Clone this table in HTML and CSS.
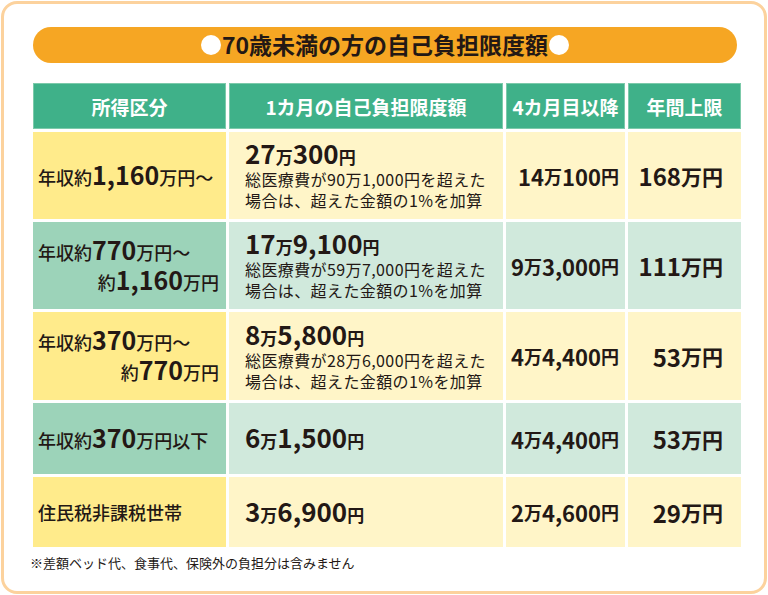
FILE: index.html
```html
<!DOCTYPE html>
<html lang="ja">
<head>
<meta charset="utf-8">
<title>70歳未満の方の自己負担限度額</title>
<link rel="stylesheet" href="styles.css">
</head>
<body>
<div class="card">
  <div class="title"><span class="dot"></span><span class="title-text">70歳未満の方の自己負担限度額</span><span class="dot"></span></div>
  <div class="table">
    <div class="th">所得区分</div>
    <div class="th">1カ月の自己負担限度額</div>
    <div class="th">4カ月目以降</div>
    <div class="th">年間上限</div>

    <div class="c1 y"><div class="l1">年収約<b class="n">1,160</b>万円～</div></div>
    <div class="c2 ly"><div class="blk"><div class="big"><b class="n">27</b>万<b class="n">300</b>円</div><div class="desc">総医療費が90万1,000円を超えた</div><div class="desc">場合は、超えた金額の1%を加算</div></div></div>
    <div class="c3 ly"><b class="n">14</b>万<b class="n">100</b>円</div>
    <div class="c4 ly"><b class="n">168</b>万円</div>

    <div class="c1 g two"><div class="l1">年収約<b class="n">770</b>万円～</div><div class="l2">約<b class="n">1,160</b>万円</div></div>
    <div class="c2 lg"><div class="blk"><div class="big"><b class="n">17</b>万<b class="n">9,100</b>円</div><div class="desc">総医療費が59万7,000円を超えた</div><div class="desc">場合は、超えた金額の1%を加算</div></div></div>
    <div class="c3 lg"><b class="n">9</b>万<b class="n">3,000</b>円</div>
    <div class="c4 lg"><b class="n">111</b>万円</div>

    <div class="c1 y two"><div class="l1">年収約<b class="n">370</b>万円～</div><div class="l2">約<b class="n">770</b>万円</div></div>
    <div class="c2 ly"><div class="blk"><div class="big"><b class="n">8</b>万<b class="n">5,800</b>円</div><div class="desc">総医療費が28万6,000円を超えた</div><div class="desc">場合は、超えた金額の1%を加算</div></div></div>
    <div class="c3 ly"><b class="n">4</b>万<b class="n">4,400</b>円</div>
    <div class="c4 ly"><b class="n">53</b>万円</div>

    <div class="c1 g"><div class="l1">年収約<b class="n">370</b>万円以下</div></div>
    <div class="c2 lg"><div class="big"><b class="n">6</b>万<b class="n">1,500</b>円</div></div>
    <div class="c3 lg"><b class="n">4</b>万<b class="n">4,400</b>円</div>
    <div class="c4 lg"><b class="n">53</b>万円</div>

    <div class="c1 y"><div class="l1">住民税非課税世帯</div></div>
    <div class="c2 ly"><div class="big"><b class="n">3</b>万<b class="n">6,900</b>円</div></div>
    <div class="c3 ly"><b class="n">2</b>万<b class="n">4,600</b>円</div>
    <div class="c4 ly"><b class="n">29</b>万円</div>
  </div>
  <p class="note">※差額ベッド代、食事代、保険外の負担分は含みません</p>
</div>
</body>
</html>
```
FILE: styles.css
```css
html, body {
  margin: 0;
  padding: 0;
  background: #ffffff;
}
body {
  font-family: "Noto Sans CJK JP", "Noto Sans", sans-serif;
  color: #231815;
}
.card {
  box-sizing: border-box;
  width: 766px;
  height: 593px;
  margin: 1px;
  border: 3px solid #fcd29d;
  border-radius: 16px;
  padding: 23px 0 0 29px;
}
.title {
  width: 704px;
  height: 36px;
  border-radius: 18px;
  background: #f6a623;
  display: flex;
  align-items: center;
  justify-content: center;
  font-size: 23px;
  font-weight: 700;
  line-height: 1;
  margin-bottom: 20px;
}
.dot {
  width: 20px;
  height: 20px;
  border-radius: 50%;
  background: #ffffff;
  margin: 0 1px;
}
.title-text {
  position: relative;
  top: -1px;
}
.table {
  display: grid;
  grid-template-columns: 193px 274px 119px 113px;
  grid-template-rows: 46px 87px 87px 88px 71px 70px;
  gap: 3px;
  width: 708px;
}
.th {
  background: #3fb189;
  color: #ffffff;
  font-size: 19px;
  font-weight: 700;
  display: flex;
  align-items: center;
  justify-content: center;
  box-shadow: inset 0 0 0 1px #7ccaaa;
}
.y { background: #ffeb8b; }
.ly { background: #fff5c8; }
.g { background: #9cd3b9; }
.lg { background: #d0e9dc; }
.n { font-weight: 700; }

.c1 {
  display: flex;
  flex-direction: column;
  justify-content: center;
  padding: 0 7px 0 5px;
  font-size: 18px;
  font-weight: 500;
  line-height: 27px;
}
.c1 .n { font-size: 25px; }
.c1 .l2 { text-align: right; }

.c2 {
  display: flex;
  align-items: center;
  padding-left: 16px;
}
.big {
  font-size: 17px;
  font-weight: 700;
  line-height: 25px;
}
.big .n { font-size: 26px; }
.desc {
  font-size: 16px;
  line-height: 21px;
  letter-spacing: 0.4px;
}
.c3, .c4 {
  display: flex;
  align-items: center;
  justify-content: flex-end;
  font-weight: 700;
}
.c3 {
  padding-right: 6px;
  font-size: 18px;
}
.c3 .n { font-size: 22px; }
.c4 {
  padding-right: 18px;
  font-size: 21px;
}
.c4 .n { font-size: 24px; }
.note {
  margin: 7px 0 0 -3px;
  font-size: 13px;
  line-height: 18px;
}
```
